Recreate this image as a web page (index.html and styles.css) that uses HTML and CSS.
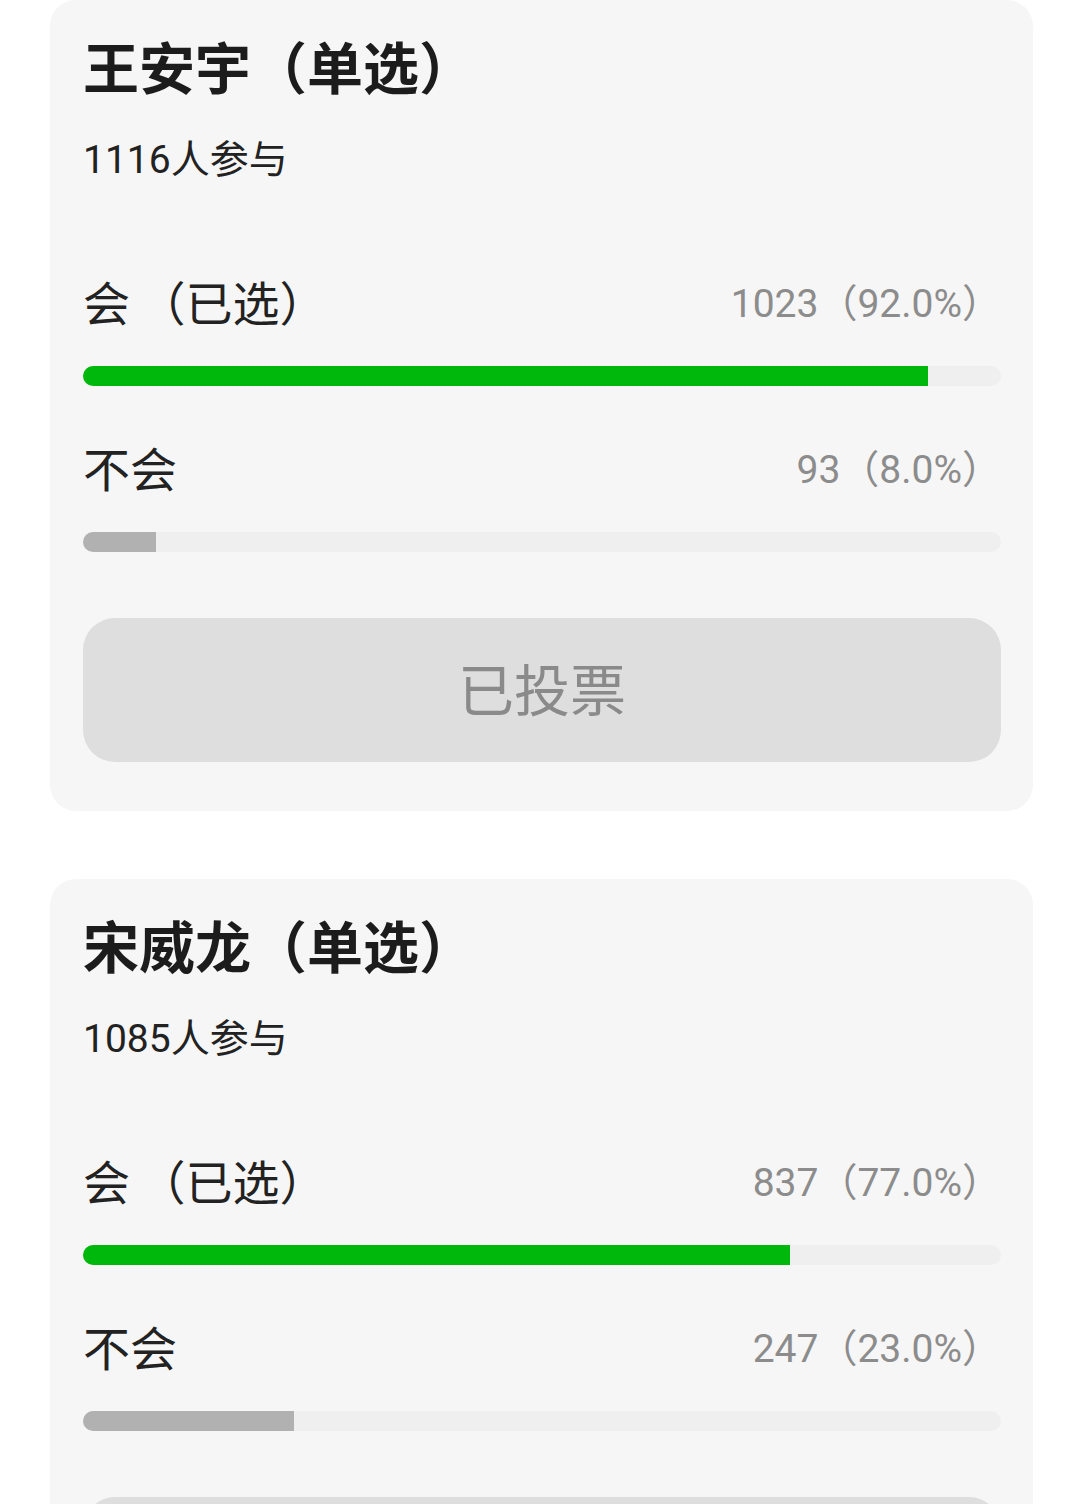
FILE: index.html
```html
<!DOCTYPE html>
<html lang="zh-CN">
<head>
    <meta charset="UTF-8">
    <meta name="viewport" content="width=device-width, initial-scale=1.0">
    <title>投票</title>
    <link rel="stylesheet" href="styles.css">
</head>
<body>
    <main class="vote-list">
        <!-- 第一个投票 -->
        <section class="vote-card">
            <h2 class="vote-title">王安宇（单选）</h2>
            <p class="vote-count">1116人参与</p>

            <div class="option">
                <div class="option-row">
                    <span class="option-label">会 （已选）</span>
                    <span class="option-value">1023（92.0%）</span>
                </div>
                <div class="bar"><div class="bar-fill chosen" style="width: 92%"></div></div>
            </div>

            <div class="option">
                <div class="option-row">
                    <span class="option-label">不会</span>
                    <span class="option-value">93（8.0%）</span>
                </div>
                <div class="bar"><div class="bar-fill" style="width: 8%"></div></div>
            </div>

            <button class="vote-btn" disabled>已投票</button>
        </section>

        <!-- 第二个投票 -->
        <section class="vote-card">
            <h2 class="vote-title">宋威龙（单选）</h2>
            <p class="vote-count">1085人参与</p>

            <div class="option">
                <div class="option-row">
                    <span class="option-label">会 （已选）</span>
                    <span class="option-value">837（77.0%）</span>
                </div>
                <div class="bar"><div class="bar-fill chosen" style="width: 77%"></div></div>
            </div>

            <div class="option">
                <div class="option-row">
                    <span class="option-label">不会</span>
                    <span class="option-value">247（23.0%）</span>
                </div>
                <div class="bar"><div class="bar-fill" style="width: 23%"></div></div>
            </div>

            <button class="vote-btn" disabled>已投票</button>
        </section>
    </main>
</body>
</html>
```

FILE: styles.css
```css
body {
    margin: 0;
    background-color: #fff;
    font-family: Roboto, "Noto Sans CJK SC", sans-serif;
    color: #222;
}

.vote-list {
    display: flex;
    flex-direction: column;
    gap: 68px;
    padding: 0 47px 0 50px;
}

.vote-card {
    background-color: #f6f6f6;
    border-radius: 26px;
    padding: 30px 32px 49px 33px;
}

.vote-title {
    margin: 0;
    font-size: 56px;
    line-height: 70px;
    font-weight: 700;
    font-family: "Noto Sans CJK SC", sans-serif;
    color: #1c1c1c;
}

.vote-count {
    margin: 35px 0 0;
    font-size: 39px;
    line-height: 50px;
    color: #222;
}

.option {
    margin-top: 50px;
}

.vote-count + .option {
    margin-top: 85px;
}

.option-row {
    display: flex;
    justify-content: space-between;
    align-items: center;
    height: 60px;
}

.option-label {
    font-size: 47px;
    font-family: "Noto Sans CJK SC", sans-serif;
    color: #222;
    word-spacing: -2px;
}

.option-value {
    font-size: 39px;
    color: #8c8c8c;
}

.bar {
    margin-top: 36px;
    height: 20px;
    border-radius: 10px;
    background-color: #efefef;
    overflow: hidden;
}

.bar-fill {
    height: 100%;
    background-color: #b1b1b1;
}

.bar-fill.chosen {
    background-color: #00b80b;
}

.vote-btn {
    display: block;
    width: 100%;
    height: 144px;
    margin-top: 66px;
    border: none;
    border-radius: 32px;
    background-color: #dedede;
    color: #8a8a8a;
    font-size: 56px;
    font-family: "Noto Sans CJK SC", sans-serif;
    padding: 0 0 8px;
}
```
